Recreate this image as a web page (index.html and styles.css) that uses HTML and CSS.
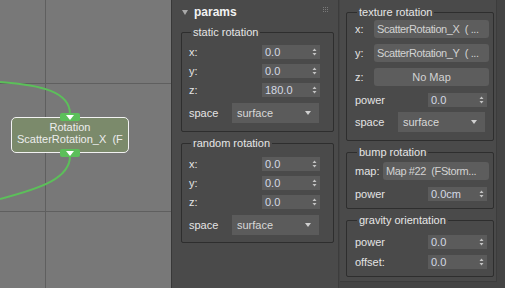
FILE: index.html
```html
<!DOCTYPE html>
<html lang="en">
<head>
  <meta charset="UTF-8">
  <title>Slate params</title>
  <link rel="stylesheet" href="styles.css">
</head>
<body>
  <div class="app">

    <!-- node view -->
    <div class="view">
      <svg class="view__wires" width="171" height="288" viewBox="0 0 171 288">
        <line x1="45.5" y1="0" x2="45.5" y2="288" class="grid"/>
        <line x1="0" y1="83.5" x2="171" y2="83.5" class="grid"/>
        <line x1="0" y1="211.5" x2="171" y2="211.5" class="grid"/>
        <path d="M0,82 C42,85 70,92 70,114" class="wire"/>
        <path d="M70,156 C70,178 42,188 0,199" class="wire"/>
      </svg>
      <div class="node">
        <div class="node__name">Rotation</div>
        <div class="node__sub">ScatterRotation_X&nbsp; (F</div>
      </div>
      <svg class="socket socket--in" width="20" height="8" viewBox="0 0 20 8"><rect width="20" height="8" rx="2" fill="#5cbf5a"/><path d="M6,2 H14 L10,7 Z" fill="#fff"/></svg>
      <svg class="socket socket--out" width="20" height="8" viewBox="0 0 20 8"><rect width="20" height="8" rx="2" fill="#5cbf5a"/><path d="M6,2 H14 L10,7 Z" fill="#fff"/></svg>
    </div>

    <!-- parameter editor -->
    <div class="editor">
      <div class="col col--left">
        <div class="roll-head">
          <svg class="roll-head__caret" width="6" height="5" viewBox="0 0 6 5"><path d="M0,0 H6 L3,5 Z" fill="#a8a8a8"/></svg>
          <span class="roll-head__title">params</span>
          <svg class="roll-head__grip" width="6" height="6" viewBox="0 0 6 6" fill="#7a7a7a">
            <rect x="0" y="0" width="1" height="1"/><rect x="2" y="0" width="1" height="1"/><rect x="4" y="0" width="1" height="1"/>
            <rect x="0" y="2" width="1" height="1"/><rect x="2" y="2" width="1" height="1"/><rect x="4" y="2" width="1" height="1"/>
            <rect x="0" y="4" width="1" height="1"/><rect x="2" y="4" width="1" height="1"/><rect x="4" y="4" width="1" height="1"/>
          </svg>
        </div>

        <fieldset class="grp grp--static">
          <legend>static rotation</legend>
          <div class="row"><span class="lbl">x:</span><span class="spin">0.0</span></div>
          <div class="row"><span class="lbl">y:</span><span class="spin">0.0</span></div>
          <div class="row"><span class="lbl">z:</span><span class="spin">180.0</span></div>
          <div class="row row--drop"><span class="lbl">space</span><span class="drop">surface</span></div>
        </fieldset>

        <fieldset class="grp grp--random">
          <legend>random rotation</legend>
          <div class="row"><span class="lbl">x:</span><span class="spin">0.0</span></div>
          <div class="row"><span class="lbl">y:</span><span class="spin">0.0</span></div>
          <div class="row"><span class="lbl">z:</span><span class="spin">0.0</span></div>
          <div class="row row--drop"><span class="lbl">space</span><span class="drop">surface</span></div>
        </fieldset>
      </div>

      <div class="col col--right">
        <fieldset class="grp grp--texture">
          <legend>texture rotation</legend>
          <div class="row row--map"><span class="lbl">x:</span><span class="map">ScatterRotation_X&nbsp; ( ...</span></div>
          <div class="row row--map"><span class="lbl">y:</span><span class="map">ScatterRotation_Y&nbsp; ( ...</span></div>
          <div class="row row--map"><span class="lbl">z:</span><span class="map map--none">No Map</span></div>
          <div class="row row--power"><span class="lbl">power</span><span class="spin">0.0</span></div>
          <div class="row row--drop"><span class="lbl">space</span><span class="drop">surface</span></div>
        </fieldset>

        <fieldset class="grp grp--bump">
          <legend>bump rotation</legend>
          <div class="row row--map"><span class="lbl">map:</span><span class="map map--short">Map #22&nbsp; (FStorm...</span></div>
          <div class="row row--power"><span class="lbl">power</span><span class="spin">0.0cm</span></div>
        </fieldset>

        <fieldset class="grp grp--gravity">
          <legend>gravity orientation</legend>
          <div class="row"><span class="lbl">power</span><span class="spin">0.0</span></div>
          <div class="row row--offset"><span class="lbl">offset:</span><span class="spin">0.0</span></div>
        </fieldset>
      </div>
    </div>
  </div>
</body>
</html>
```

FILE: styles.css
```css
/* Root resets */
* { margin: 0; padding: 0; box-sizing: border-box; }
body { font-family: 'Liberation Sans', Arial, sans-serif; font-size: 11px; background: #444444; color: #dedede; overflow: hidden; }

.app { display: flex; width: 505px; height: 288px; }

/* Node view */
.view { position: relative; width: 172px; height: 288px; background: #787878; border-right: 1px solid #383838; flex: none; }
.view__wires { display: block; }
.grid { stroke: #5f5f5f; stroke-width: 1; }
.wire { fill: none; stroke: #5cbf5a; stroke-width: 2; }

.node {
  position: absolute;
  left: 11px;
  top: 117px;
  width: 118px;
  height: 36px;
  padding: 3px 0 0 5px;
  background: #7b8a6b;
  border: 1px solid #f2f2f2;
  border-radius: 5px;
  overflow: hidden;
  color: #ededed;
  line-height: 12px;
  white-space: nowrap;
}
.node__name { text-align: center; padding-right: 5px; }
.socket { position: absolute; left: 60px; display: block; }
.socket--in { top: 113px; }
.socket--out { top: 149px; }

/* Parameter editor */
.editor { display: flex; flex: 1; background: #444444; }
.col { flex: none; background: #4a4a4a; }
.col--left { width: 167px; border-right: 1px solid #3c3c3c; padding-left: 9px; }
.col--right { width: 157px; height: 282px; margin-left: 1px; padding-left: 6px; border-right: 1px solid #3c3c3c; border-bottom: 1px solid #3c3c3c; }

/* Rollout header */
.roll-head { display: flex; align-items: center; height: 23px; padding: 1px 0 0 1px; }
.roll-head__caret { display: block; margin-right: 6px; }
.roll-head__title { font-weight: 700; font-size: 12px; color: #f2f2f2; }
.roll-head__grip { display: block; margin-left: auto; margin-right: 9px; margin-top: -5px; }

/* Group boxes */
.grp { border: 1px solid #2e2e2e; border-radius: 2px; min-width: 0; padding-left: 7px; }
.grp legend { padding: 0 2px; margin-left: 2px; line-height: 13px; color: #e6e6e6; }
.grp--static { width: 153px; margin-top: 3px; padding-top: 6px; padding-bottom: 8px; }
.grp--random { width: 153px; margin-top: 5px; padding-top: 7px; padding-bottom: 7px; }
.grp--texture { width: 148px; margin-top: 6px; padding: 1px 0 8px 8px; }
.grp--bump { width: 148px; margin-top: 5px; padding: 3px 0 7px 8px; }
.grp--gravity { width: 148px; margin-top: 5px; padding: 8px 0 7px 8px; }

/* Rows */
.row { display: flex; align-items: center; height: 14px; margin-top: 5px; }
.row:first-of-type { margin-top: 0; }
.row--drop { height: 20px; margin-top: 6px; }
.grp--texture .row--drop { margin-top: 5px; }
.row--map { height: 18px; margin-top: 6px; }
.row--power { margin-top: 7px; }
.row--offset { margin-top: 6px; }
.lbl { color: #e4e4e4; }

.spin {
  margin-left: auto;
  margin-right: 13px;
  width: 58px;
  height: 14px;
  padding-left: 3px;
  background: #5b5b5b url("data:image/svg+xml;utf8,<svg xmlns='http://www.w3.org/2000/svg' width='5' height='8'><path d='M0.5,3 L2.5,0.5 L4.5,3 Z M0.5,5 L2.5,7.5 L4.5,5 Z' fill='%23c4c4c4'/></svg>") no-repeat right 3px center;
  line-height: 14px;
  color: #d4d9e4;
}
.col--right .spin { width: 59px; margin-right: 6px; }

.drop {
  margin-left: auto;
  margin-right: 14px;
  width: 87px;
  height: 20px;
  padding-left: 5px;
  background: #5b5b5b url("data:image/svg+xml;utf8,<svg xmlns='http://www.w3.org/2000/svg' width='6' height='4'><path d='M0,0 H6 L3,4 Z' fill='%23d0d0d0'/></svg>") no-repeat right 8px center;
  line-height: 20px;
  color: #d8d8d8;
}
.col--right .drop { margin-right: 8px; }

.map {
  margin-left: auto;
  margin-right: 4px;
  width: 115px;
  height: 18px;
  padding: 0 3px;
  background: #5d5d5d;
  border-radius: 3px;
  line-height: 18px;
  letter-spacing: -0.4px;
  color: #d2d2d2;
  white-space: nowrap;
  overflow: hidden;
}
.map--none { text-align: center; letter-spacing: 0; }
.map--short { width: 106px; }
```
